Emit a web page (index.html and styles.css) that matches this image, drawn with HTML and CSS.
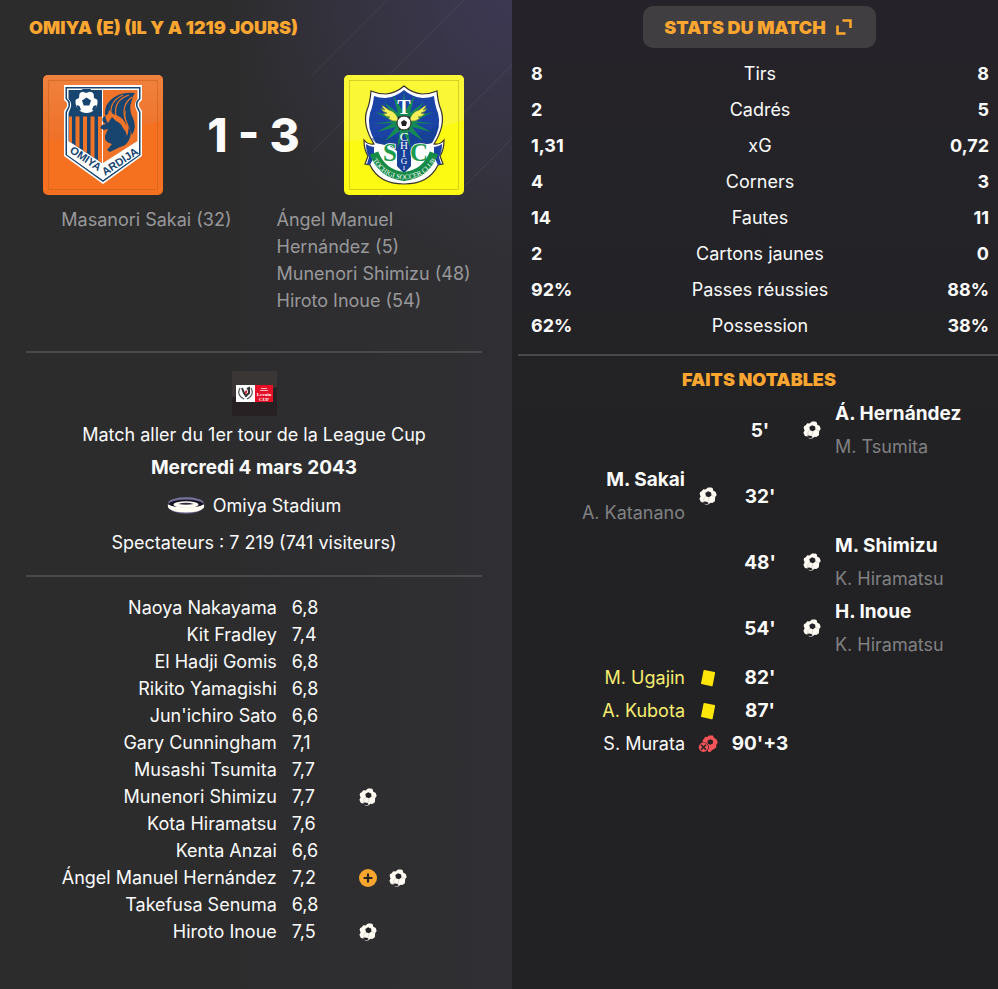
FILE: index.html
```html
<!DOCTYPE html>
<html lang="fr">
<head>
<meta charset="utf-8">
<meta name="viewport" content="width=device-width, initial-scale=1">
<title>Omiya 1 - 3 Tochigi</title>
<link rel="stylesheet" href="styles.css">
</head>
<body>
<svg class="sprite" aria-hidden="true">
  <symbol id="ball" viewBox="0 0 18 18">
    <path fill="#fffaf2" d="M2.800 4.200 4.200 2.300l2.300.2L9 .4l3.300.1 1.600 1 .2 2 2.600 1.500 1 3.100-1.500 2-.3 4.200-2.600 1.700-1.700-.3-2.400 1.900H6.100l-1.600-2-2.600-.6L.4 11.700l1.200-2.100L.6 6.800l.6-1.700z"/>
    <path fill="#242428" d="m6.300 5.900 2.800-1.700 3 1.200.4 3.100-2.500 1.700-3-1zM4 14.800l2.400-.3 2.600.8.600 1.200-1.500.6H5.500z"/>
    <path fill="none" stroke="#b9b5b0" stroke-width=".5" d="M6.900 9.200 4.800 11.400l.2 3M12.500 8.500l3 .9M10 10.200l-1.300 5"/>
  </symbol>
  <symbol id="missed" viewBox="0 0 20 18">
    <path fill="#f65458" d="m6 4 1.200-2.200 2.200.3 1.400-1.600h4l1.300 2.300 2.700 1.900 1 3-1.500 2-.2 3-2.900 1.900-4 2.400L5 9.300l-.8-1.100.9-3.800z"/>
    <path fill="#242326" d="m9.400 5.700 2.700-1.500 2.700 1.100.2 2.900-2.300 1.600-2.800-1z"/>
    <circle cx="5.500" cy="12.300" r="5.400" fill="#242326"/>
    <circle cx="5.500" cy="12.300" r="4.700" fill="#f65458"/>
    <path stroke="#242326" stroke-width="1.500" d="m3 9.800 5 5m0-5-5 5"/>
    <path fill="#f65458" d="m11 13.500 2.200-.7.700 1.800-1.600 2.500-2.300-.2z"/>
  </symbol>
  <symbol id="card" viewBox="0 0 18 18">
    <path fill="#ffe60a" stroke="#ffe60a" stroke-width="1.400" stroke-linejoin="round" d="m5.200 1.800 10.200 2L12.900 16.600 2.700 14.400z"/>
  </symbol>
  <symbol id="plus" viewBox="0 0 18 18">
    <circle cx="9" cy="9" r="9" fill="#f6a62c"/>
    <path stroke="#242326" stroke-width="2.200" d="M9 4.600v8.800M4.600 9h8.800"/>
  </symbol>
</svg>

<main class="report">
  <section class="match">
    <h1 class="title">OMIYA (E) (IL Y A 1219 JOURS)</h1>

    <div class="score-row">
      <svg class="crest" viewBox="0 0 120 120" role="img" aria-label="Omiya Ardija">
        <defs>
          <linearGradient id="or" x2="0" y2="1"><stop stop-color="#ef823e"/><stop offset="1" stop-color="#ef7028"/></linearGradient>
          <path id="bandL" d="M26 77 62 101"/>
          <path id="bandR" d="M62 101 98 77"/>
        </defs>
        <rect width="120" height="120" rx="5" fill="#f5701f"/>
        <path fill="url(#or)" d="M5 0h110a5 5 0 0 1 5 5v40Q62 64 0 66V5a5 5 0 0 1 5-5z"/>
        <rect x="5.500" y="5.500" width="109" height="109" fill="none" stroke="#c9601f" stroke-opacity=".6"/>
        <path fill="#fff" d="M21 10h78v15q-5 3-2 8l2 3v45l-39 28-39-28V36l2-3q3-5-2-8z"/>
        <path fill="#17456f" d="M22.500 12h75v12q-5 4-2 9l2 4v43L60 107 22.500 80V37l2-4q3-5-2-9z"/>
        <path fill="#fff" d="M24 13.500h72v10q-5 4-2 10l2 4v42L60 105 24 79.500v-42l2-4q3-6-2-10z"/>
        <path fill="#17456f" d="M25.500 15H59v73L25.500 66V38l2-5q2-5-2-9z"/>
        <path fill="#ef7429" d="M60 15h34.500v9q-4 5-1.500 10l1.500 4v28L60 88z"/>
        <path fill="#ef7429" d="M26 41.500h3v26.700l-3-2zM32.500 41.500h4V73l-4-2.600zM40 41.500h4V78l-4-2.600zM47.500 41.500h4V83l-4-2.600zM55 41.500h4V88l-4-2.600z"/>
        <circle cx="43.500" cy="27" r="11" fill="#fff"/>
        <path fill="#17456f" d="m43.500 22.500 4.500 3-1.700 5h-5.600l-1.700-5zM38 16l5 2 6-2-1.500-2h-8zM32 25l4-2 .500-5-4 3zM55 25l-4-2-.500-5 4 3zM35 36l3-1-1.500-4-3-1zM52 36l-3-1 1.500-4 3-1z"/>
        <path fill="#17456f" d="M92 18q-14-1-22 5-8 6-8 14 0 7 3 11l4-6 4 4q5 2 7 7 3 3 4 8 3-7-1-14-4-7 0-12-2 9 2 15 5 8 1 15-3 6-9 7l-10 5-3-2 5-6q-8-2-7-8l3-7-4 1-4-2 2-3 4-1-3-2q-2-4 2-6l3-2 1-4 4 4q9 2 13 10 5 6 6 11 5-8 1-17-5-9-1-18 1-5 3-7z"/>
        <path fill="none" stroke="#ef7429" stroke-width="1.200" d="M86 20q-16 5-13 22M89 22q-12 9-6 24 3 6 1 11M80 20q-13 6-12 18"/>
        <path fill="#fff" d="m24 66.500 36 23.500 36-23.500v13L60 105 24 79.500z"/>
        <g fill="#17456f" font-family="Liberation Sans, sans-serif" font-size="11" font-weight="700">
          <text><textPath href="#bandL">OMIYA</textPath></text>
          <text><textPath href="#bandR">ARDIJA</textPath></text>
        </g>
      </svg>

      <p class="score">1 - 3</p>

      <svg class="crest" viewBox="0 0 120 120" role="img" aria-label="Tochigi Soccer Club">
        <defs><path id="ribbon" d="M27 82Q37 103 60 104.500 83 103 94 82"/></defs>
        <rect width="120" height="120" rx="5" fill="#fcf913"/>
        <path fill="#f9f736" d="M5 0h110a5 5 0 0 1 5 5v40Q62 64 0 66V5a5 5 0 0 1 5-5z"/>
        <rect x="5.500" y="5.500" width="109" height="109" fill="none" stroke="#b9b71c" stroke-opacity=".6"/>
        <path fill="#fff" stroke="#35322c" stroke-width="1.200" d="M60 11q-8 7-18 8-8 0-15-3-1 12-4 19-5 15 7 34-6 1-10-4 0 10 4 16l-3 8 5 1q9 19 34 19t34-19l5-1-3-8q4-6 4-16-4 5-10 4 12-19 7-34-3-7-4-19-7 3-15 3-10-1-18-8z"/>
        <path fill="#1b43a5" d="M60 15q-8 7-19 8-6 0-11-2-1 10-4 17-4 14 6 30l14 3 7 5v15l7 7 7-7V76l7-5 14-3q10-16 6-30-3-7-4-17-5 2-11 2-11-1-19-8z"/>
        <path fill="#16408e" d="M27 63q50-1 68-13-2 10-7 18l-14 3-7 5v15l-7 7-7-7V76l-7-5-14-3z" opacity=".6"/>
        <path fill="#168a55" d="m60 17 2 18 9-15-5 18 14-11-11 15 20-5-18 9 20 3-20-1 16 9-19-5 11 14-15-10 3 18-7-16-7 16 3-18-15 10 11-14-19 5 16-9-20 1 20-3-18-9 20 5-11-15 14 11-5-18 9 15z"/>
        <path fill="#f5f05a" stroke="#3f6a35" stroke-width=".500" d="M54 44q-2-7-9-9l-7-5q0 3 3 5-2 0-4-2 1 4 6 5-2 1-4 0 2 4 7 4l-2 1q4 4 10 3zM66 44q2-7 9-9l7-5q0 3-3 5 2 0 4-2-1 4-6 5 2 1 4 0-2 4-7 4l2 1q-4 4-10 3z"/>
        <circle cx="60" cy="48" r="7" fill="#fff" stroke="#222"/>
        <path fill="#222" d="m60 45 3 2-1 4h-4l-1-4zM54 44l3-3-3 1zM66 44l-3-3 3 1zM54.500 53l2.500 2-2 0zM65.500 53l-2.500 2 2 0z"/>
        <g fill="#fff" text-anchor="middle" font-family="Liberation Serif, serif">
          <text x="60" y="39" font-size="20" font-weight="700">T</text>
          <text x="60" y="66" font-size="13">C</text>
          <text x="60" y="74" font-size="11">H</text>
          <text x="60" y="82" font-size="10">I</text>
          <text x="60" y="89" font-size="9">G</text>
          <text x="60" y="95" font-size="7">I</text>
        </g>
        <g fill="#1a9a4d" stroke="#fff" stroke-width="1.600" paint-order="stroke" text-anchor="middle" font-family="Liberation Serif, serif" font-size="25" font-weight="700">
          <text x="46" y="86">S</text><text x="75" y="86">C</text>
        </g>
        <path fill="#1b43a5" d="M22 69q4 3 8 3v10l-4 8-3-1 2-7q-3-5-3-13zM98 69q-4 3-8 3v10l4 8 3-1-2-7q3-5 3-13z"/>
        <path fill="none" stroke="#168b48" stroke-width="9" d="M30 78Q38 99 60 101.500 82 99 90 78"/>
        <text fill="#fff" font-family="Liberation Serif, serif" font-size="7" text-anchor="middle"><textPath href="#ribbon" startOffset="50%">TOCHIGI SOCCER CLUB</textPath></text>
      </svg>
    </div>

    <div class="scorers">
      <p class="home">Masanori Sakai (32)</p>
      <p>Ángel Manuel Hernández (5)<br>Munenori Shimizu (48)<br>Hiroto Inoue (54)</p>
    </div>

    <hr>

    <div class="details">
      <svg class="cup" viewBox="0 0 45 45" role="img" aria-label="League Cup">
        <path fill="#3a3635" d="M0 0h45v45H0z"/>
        <path fill="#272123" d="M0 26q25-2 45-10v29H0z"/>
        <path fill="#fff" d="M4 14h19v17H4z"/><path fill="#e50f26" d="M23 14h18v17H23z"/>
        <path fill="none" stroke="#555" stroke-width="1.200" d="M8 17q-3 5 1 9l3 2M19 17q3 5-1 9l-3 2"/>
        <path fill="none" stroke="#333" stroke-width="2" d="m10 17 2 5 2 3 3-3v-5l-2 1"/><path fill="#d8232f" d="m13 20 2.500-1-1 4h-1.500z"/>
        <path stroke="#f8b5ba" d="M29 17.500h6M28 19.500h8"/>
        <g fill="#fff" text-anchor="middle" font-family="Liberation Serif, serif" font-weight="700" font-size="5"><text x="32" y="25">Levain</text><text x="32" y="30">CUP</text></g>
      </svg>
      <p>Match aller du 1er tour de la League Cup</p>
      <p class="date">Mercredi 4 mars 2043</p>
      <p class="stadium">
        <svg class="arena" viewBox="0 0 38 18" aria-hidden="true">
          <ellipse cx="19" cy="9.500" rx="18.500" ry="8.500" fill="#5b587f"/>
          <path fill="#fffdf4" d="M1 8.500q18 6 36 0v3q-4 5-18 5T1 11.500z"/>
          <ellipse cx="19" cy="6.500" rx="17.500" ry="5" fill="#77739a"/>
          <path fill="#171525" d="M1 8Q5 3.500 19 3.500T37 8q-4 3-9 3H10Q5 11 1 8z"/>
          <ellipse cx="19" cy="8.600" rx="12.500" ry="3.400" fill="#fffdf4"/>
          <path fill="#29283a" d="M11 8q8-2.500 16 0-8 1.500-16 0z"/>
        </svg>
        <span>Omiya Stadium</span>
      </p>
      <p>Spectateurs : 7 219 (741 visiteurs)</p>
    </div>

    <hr>

    <table class="players">
      <tbody>
        <tr><th scope="row">Naoya Nakayama</th><td>6,8</td><td></td></tr>
        <tr><th scope="row">Kit Fradley</th><td>7,4</td><td></td></tr>
        <tr><th scope="row">El Hadji Gomis</th><td>6,8</td><td></td></tr>
        <tr><th scope="row">Rikito Yamagishi</th><td>6,8</td><td></td></tr>
        <tr><th scope="row">Jun'ichiro Sato</th><td>6,6</td><td></td></tr>
        <tr><th scope="row">Gary Cunningham</th><td>7,1</td><td></td></tr>
        <tr><th scope="row">Musashi Tsumita</th><td>7,7</td><td></td></tr>
        <tr><th scope="row">Munenori Shimizu</th><td>7,7</td><td><div class="marks"><svg class="icon"><use href="#ball"/></svg></div></td></tr>
        <tr><th scope="row">Kota Hiramatsu</th><td>7,6</td><td></td></tr>
        <tr><th scope="row">Kenta Anzai</th><td>6,6</td><td></td></tr>
        <tr><th scope="row">Ángel Manuel Hernández</th><td>7,2</td><td><div class="marks"><svg class="icon"><use href="#plus"/></svg><svg class="icon"><use href="#ball"/></svg></div></td></tr>
        <tr><th scope="row">Takefusa Senuma</th><td>6,8</td><td></td></tr>
        <tr><th scope="row">Hiroto Inoue</th><td>7,5</td><td><div class="marks"><svg class="icon"><use href="#ball"/></svg></div></td></tr>
      </tbody>
    </table>
  </section>

  <section class="side">
    <button class="stats-button" type="button">
      STATS DU MATCH
      <svg class="expand" viewBox="0 0 16 16" aria-hidden="true"><path d="M6.500 1.500h8v7.500M1.500 6.500v8h8" fill="none" stroke="currentColor" stroke-width="2.600"/></svg>
    </button>

    <table class="stats">
      <tbody>
        <tr><td>8</td><th scope="row">Tirs</th><td>8</td></tr>
        <tr><td>2</td><th scope="row">Cadrés</th><td>5</td></tr>
        <tr><td>1,31</td><th scope="row">xG</th><td>0,72</td></tr>
        <tr><td>4</td><th scope="row">Corners</th><td>3</td></tr>
        <tr><td>14</td><th scope="row">Fautes</th><td>11</td></tr>
        <tr><td>2</td><th scope="row">Cartons jaunes</th><td>0</td></tr>
        <tr><td>92%</td><th scope="row">Passes réussies</th><td>88%</td></tr>
        <tr><td>62%</td><th scope="row">Possession</th><td>38%</td></tr>
      </tbody>
    </table>

    <hr>

    <h2 class="title">FAITS NOTABLES</h2>

    <ol class="events">
      <li class="away"><span class="who"><b>Á. Hernández</b><small>M. Tsumita</small></span><svg class="icon"><use href="#ball"/></svg><time>5'</time></li>
      <li><span class="who"><b>M. Sakai</b><small>A. Katanano</small></span><svg class="icon"><use href="#ball"/></svg><time>32'</time></li>
      <li class="away"><span class="who"><b>M. Shimizu</b><small>K. Hiramatsu</small></span><svg class="icon"><use href="#ball"/></svg><time>48'</time></li>
      <li class="away"><span class="who"><b>H. Inoue</b><small>K. Hiramatsu</small></span><svg class="icon"><use href="#ball"/></svg><time>54'</time></li>
      <li><span class="who booked">M. Ugajin</span><svg class="icon"><use href="#card"/></svg><time>82'</time></li>
      <li><span class="who booked">A. Kubota</span><svg class="icon"><use href="#card"/></svg><time>87'</time></li>
      <li><span class="who">S. Murata</span><svg class="icon missed"><use href="#missed"/></svg><time>90'+3</time></li>
    </ol>
  </section>
</main>
</body>
</html>
```
FILE: styles.css
```css
* { box-sizing: border-box; }

body {
  margin: 0;
  background: #222224;
  color: #fbfbfb;
  font: 18px/27px Inter, "Liberation Sans", sans-serif;
}

h1, h2, p, ol { margin: 0; padding: 0; }

.sprite { display: none; }
svg { display: block; flex: none; }
b, time, .date { font-size: 19px; font-weight: 700; }

hr {
  width: 100%;
  height: 2px;
  margin: 0;
  border: 0;
  background: #49494b;
}

.title {
  color: #faa630;
  font-size: 18px;
  font-weight: 900;
  line-height: 27px;
}

.report {
  display: grid;
  grid-template-columns: 512fr 486fr;
  min-height: 100vh;
}

/* Match summary */
.match {
  padding: 14px 30px 44px 26px;
  background:
    linear-gradient(135deg,
      transparent 52px, #ffffff0a 53px, transparent 55px,
      transparent 106px, #ffffff0a 107px, transparent 109px,
      transparent 186px, #ffffff0a 187px, transparent 189px,
      transparent 238px, #ffffff0a 239px, transparent 241px) top right / 200px 200px no-repeat,
    radial-gradient(ellipse 280px 260px at 100% 0, #3d3853, transparent) no-repeat,
    linear-gradient(90deg, #2c2c2d 40%, #303034);
}

.match .title { padding-left: 3px; }

.score-row {
  display: flex;
  align-items: center;
  justify-content: space-between;
  margin-top: 34px;
  padding: 0 18px 0 17px;
}

.crest { width: 120px; height: 120px; }
.score { font-size: 46px; font-weight: 800; line-height: 48px; }

.scorers {
  display: grid;
  grid-template-columns: 1fr 1fr;
  gap: 45px;
  margin: 11px 0 37px;
  color: #98989a;
}

.scorers .home { text-align: right; }

.details {
  display: flex;
  flex-direction: column;
  align-items: center;
  padding: 18px 0 16px;
  line-height: 33px;
}

.cup { width: 45px; height: 45px; margin-bottom: 2px; }

.stadium {
  display: flex;
  align-items: center;
  gap: 8px;
  height: 42px;
}

.arena { width: 38px; height: 18px; }

table { width: 100%; border-collapse: collapse; table-layout: fixed; }
th, td { padding: 0; font-weight: 400; }

.players { margin-top: 17px; }
.players tr { height: 27px; }
.players th { width: 55%; text-align: right; }
.players td { padding-left: 15px; }
.players td:nth-child(2) { width: 15%; }
.players td:last-child { padding-left: 14px; }

.marks { display: flex; gap: 12px; }
.icon { width: 18px; height: 18px; }
.icon.missed { width: 20px; }

/* Statistics and key events */
.side {
  display: flex;
  flex-direction: column;
  padding: 6px 0 24px 6px;
  background: linear-gradient(#252329, #222224 50%);
}

.stats-button {
  display: flex;
  align-items: center;
  align-self: center;
  gap: 10px;
  height: 42px;
  margin-left: 3px;
  padding: 0 24px 0 21px;
  border: 0;
  border-radius: 10px;
  background: #403e40;
  color: #faa630;
  font: 900 18px/27px Inter, "Liberation Sans", sans-serif;
}

.expand { width: 16px; height: 16px; }

.stats {
  width: auto;
  margin: 7px 9px 11px 13px;
}

.stats tr { height: 36px; }
.stats td { width: 25%; font-size: 18px; font-weight: 700; }
.stats td:last-child { text-align: right; }

.side .title {
  margin: 10px 0 4px 2px;
  text-align: center;
}

.events { margin: 0 9px 0 13px; list-style: none; line-height: 33px; }

.events li {
  display: grid;
  grid-template-columns: 1fr 46px 58px 46px 1fr;
  align-items: center;
  justify-items: center;
}

.events li > * { grid-row: 1; }
.who { display: grid; grid-column: 1; justify-self: end; text-align: right; }
.events .icon { grid-column: 2; }
.events time { grid-column: 3; white-space: nowrap; }
.away .who { grid-column: 5; justify-self: start; text-align: left; }
.events .away .icon { grid-column: 4; }

.who small { color: #808082; font-size: 18px; }
.booked { color: #f6ed70; }
```
